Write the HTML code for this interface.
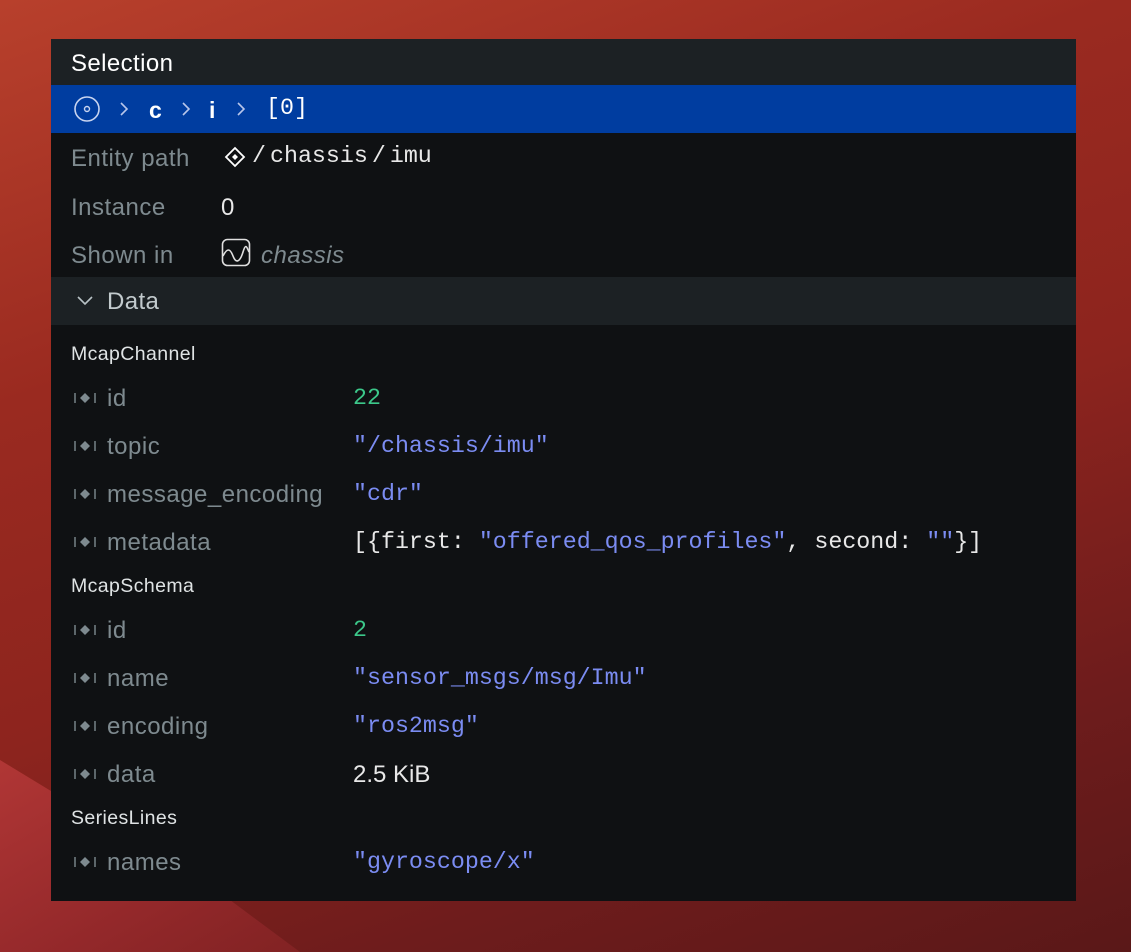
<!DOCTYPE html>
<html><head><meta charset="utf-8"><style>
*{margin:0;padding:0;box-sizing:border-box}
body{width:1131px;height:952px;overflow:hidden;position:relative;
background:linear-gradient(160deg,#b8402c 0%,#9a2a20 30%,#8d241e 55%,#6e1c1c 80%,#5a1818 100%);
font-family:"Liberation Sans",sans-serif}
.bg2{position:absolute;left:0;top:700px;width:400px;height:252px;background:linear-gradient(150deg,#b83a38 0%,#93282a 60%,#7a2020 100%);clip-path:polygon(0 60px,0 252px,300px 252px,230px 200px)}
.panel{position:absolute;left:51px;top:39px;width:1025px;height:862px;background:#0f1113;overflow:hidden}
.hdr{position:absolute;left:0;top:0;width:100%;height:46px;background:#1c2124;color:#fff;font-size:24px;letter-spacing:0.4px;padding:11px 0 0 20px}
.blue{position:absolute;left:0;top:46px;width:100%;height:48px;background:#003da0}
.dh{position:absolute;left:0;top:238px;width:100%;height:48px;background:#1c2124}
.t{position:absolute;white-space:nowrap;line-height:1}
.lab{color:#7e8a8f;font-size:24px;letter-spacing:0.5px;margin-top:1px}
.mono{font-family:"Liberation Mono",monospace;font-size:23.3px;margin-top:1px}
.w{color:#e8e8e8}.g{color:#3cc88a}.s{color:#7b8cf2}
.sec{color:#dfe3e4;font-size:19.5px;letter-spacing:0.4px;margin-top:1px}
</style></head><body>
<div class="bg2"></div>
<div class="panel">
<div class="hdr">Selection</div>
<div class="blue">
<svg style="position:absolute;left:22px;top:10px" width="28" height="28" viewBox="0 0 28 28"><circle cx="14" cy="14" r="12" fill="none" stroke="#c8d4f0" stroke-width="1.6"/><circle cx="14" cy="14" r="2.5" fill="none" stroke="#c8d4f0" stroke-width="1.4"/></svg>
<svg style="position:absolute;left:68px;top:17px" width="10" height="14" viewBox="0 0 10 14"><path d="M2 1l6 6-6 6" fill="none" stroke="#b8c6ea" stroke-width="1.6"/></svg>
<div class="t" style="left:98px;top:14px;color:#fff;font-size:23px;font-weight:bold">c</div>
<svg style="position:absolute;left:130px;top:17px" width="10" height="14" viewBox="0 0 10 14"><path d="M2 1l6 6-6 6" fill="none" stroke="#b8c6ea" stroke-width="1.6"/></svg>
<div class="t" style="left:158px;top:14px;color:#fff;font-size:23px;font-weight:bold">i</div>
<svg style="position:absolute;left:185px;top:17px" width="10" height="14" viewBox="0 0 10 14"><path d="M2 1l6 6-6 6" fill="none" stroke="#b8c6ea" stroke-width="1.6"/></svg>
<div class="t mono" style="left:215px;top:11px;color:#fff">[0]</div>
</div>
<div class="t lab" style="left:20px;top:107px">Entity path</div>
<svg style="position:absolute;left:173px;top:107px" width="22" height="22" viewBox="0 0 22 22"><path d="M11 2l9 9-9 9-9-9z" fill="none" stroke="#fff" stroke-width="1.8"/><path d="M11 8l3 3-3 3-3-3z" fill="#fff"/></svg>
<div class="t mono w" style="left:201px;top:105px">/<span style="margin-left:4px">chassis</span><span style="margin-left:4px">/</span><span style="margin-left:4px">imu</span></div>
<div class="t lab" style="left:20px;top:156px">Instance</div>
<div class="t w" style="left:170px;top:157px;font-size:24px">0</div>
<div class="t lab" style="left:20px;top:204px">Shown in</div>
<svg style="position:absolute;left:170px;top:199px" width="30" height="30" viewBox="0 0 30 30"><rect x="1.5" y="1.5" width="27" height="26" rx="5" fill="none" stroke="#e0e0e0" stroke-width="1.6"/><path d="M2 18c4-8 7-8 10 0s7 6 10-4 4-4 6 0" fill="none" stroke="#e0e0e0" stroke-width="1.6"/></svg>
<div class="t lab" style="left:210px;top:204px;font-style:italic">chassis</div>
<div class="dh">
<svg style="position:absolute;left:25px;top:18px" width="18" height="12" viewBox="0 0 18 12"><path d="M2 2l7 7 7-7" fill="none" stroke="#b8c2c6" stroke-width="1.6"/></svg>
<div class="t" style="left:56px;top:13px;color:#c2cacd;font-size:24px;letter-spacing:0.4px">Data</div>
</div>
<div class="t sec" style="left:20px;top:305px">McapChannel</div>
<div class="t sec" style="left:20px;top:537px">McapSchema</div>
<div class="t sec" style="left:20px;top:769px">SeriesLines</div>
<div class="t lab" style="left:56px;top:347px">id</div><div class="t mono g" style="left:302px;top:347px">22</div>
<div class="t lab" style="left:56px;top:395px">topic</div><div class="t mono s" style="left:302px;top:395px">"/chassis/imu"</div>
<div class="t lab" style="left:56px;top:443px">message_encoding</div><div class="t mono s" style="left:302px;top:443px">"cdr"</div>
<div class="t lab" style="left:56px;top:491px">metadata</div><div class="t mono w" style="left:302px;top:491px">[{first: <span class="s">"offered_qos_profiles"</span>, second: <span class="s">""</span>}]</div>
<div class="t lab" style="left:56px;top:579px">id</div><div class="t mono g" style="left:302px;top:579px">2</div>
<div class="t lab" style="left:56px;top:627px">name</div><div class="t mono s" style="left:302px;top:627px">"sensor_msgs/msg/Imu"</div>
<div class="t lab" style="left:56px;top:675px">encoding</div><div class="t mono s" style="left:302px;top:675px">"ros2msg"</div>
<div class="t lab" style="left:56px;top:723px">data</div><div class="t w" style="left:302px;top:724px;font-size:24px">2.5 KiB</div>
<div class="t lab" style="left:56px;top:811px">names</div><div class="t mono s" style="left:302px;top:811px">"gyroscope/x"</div>
<svg style="position:absolute;left:22px;top:350px" width="24" height="520" viewBox="0 0 24 520">
<g fill="#7e8a8f" stroke="#7e8a8f" stroke-width="1.4">
<g id="ic"><path d="M2 4v10M22 4v10" fill="none"/><path d="M12 4l5 5-5 5-5-5z" stroke="none"/></g>
<use href="#ic" y="48"/><use href="#ic" y="96"/><use href="#ic" y="144"/>
<use href="#ic" y="232"/><use href="#ic" y="280"/><use href="#ic" y="328"/><use href="#ic" y="376"/>
<use href="#ic" y="464"/>
</g></svg>
</div>
</body></html>
